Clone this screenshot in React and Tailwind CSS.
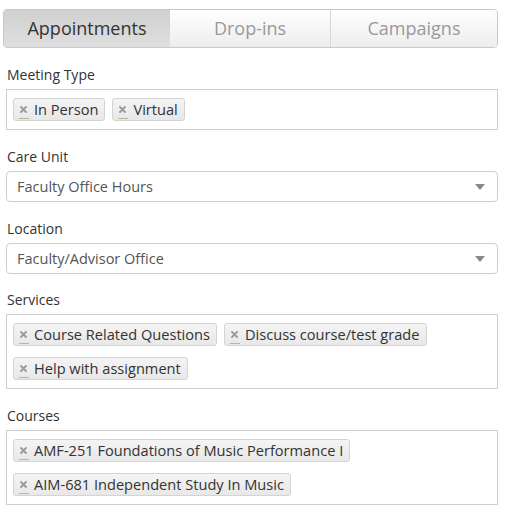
import React from 'react';

const Tag = ({ children }) => (
  <span className="inline-flex items-center h-[23px] pl-[6px] pr-[6px] rounded-[3px] border border-[#d4d4d4] bg-gradient-to-b from-[#f4f4f4] to-[#e8e8e8] text-[14.6px] leading-[21px] text-[#333]">
    <span className="relative mr-[7px] flex items-center">
      <svg width="7" height="7" viewBox="0 0 7 7">
        <path d="M1 1 L6 6 M6 1 L1 6" stroke="#999" strokeWidth="1.8" strokeLinecap="round" />
      </svg>
      <span className="absolute left-[-1px] right-[-2px] bottom-[-6px] h-px bg-[#bdb396]"></span>
    </span>
    {children}
  </span>
);

const Label = ({ children }) => (
  <div className="text-[14px] leading-[20px] text-[#333] mb-[4px] pl-px">{children}</div>
);

const MultiBox = ({ tags }) => (
  <div className="border border-[#cfcfcf] bg-white px-[6px] py-[8px] flex flex-wrap gap-x-[7px] gap-y-[11px]">
    {tags.map((t) => (
      <Tag key={t}>{t}</Tag>
    ))}
  </div>
);

const Select = ({ value }) => (
  <div className="h-[31px] border border-[#cfcfcf] rounded-[4px] bg-white flex items-center justify-between pl-[10px] pr-[12px]">
    <span className="text-[14.5px] text-[#555]">{value}</span>
    <svg width="10" height="6" viewBox="0 0 10 6">
      <path d="M0 0 L10 0 L5 6 Z" fill="#888" />
    </svg>
  </div>
);

export default function App() {
  const tabs = ['Appointments', 'Drop-ins', 'Campaigns'];
  return (
    <div className="bg-white w-[521px] h-[511px] pt-[9px]" style={{ fontFamily: '"Open Sans", "Noto Sans", sans-serif' }}>
      <div className="ml-[3px] w-[495px] h-[39px] flex border border-[#c9c9c9] rounded-[4px] overflow-hidden">
        {tabs.map((t, i) => (
          <div
            key={t}
            className={
              i === 0
                ? 'w-[166px] flex items-center justify-center text-[18px] text-[#333] bg-gradient-to-b from-[#d0d0d0] to-[#dfdfdf]'
                : i === 1
                ? 'w-[161px] flex items-center justify-center text-[18px] text-[#999] bg-gradient-to-b from-white to-[#ededed] border-r border-[#d6d6d6]'
                : 'flex-1 flex items-center justify-center text-[18px] text-[#999] bg-gradient-to-b from-white to-[#ededed]'
            }
          >
            {t}
          </div>
        ))}
      </div>

      <div className="ml-[6px] w-[492px]">
        <div className="mt-[17px]">
          <Label>Meeting Type</Label>
          <MultiBox tags={['In Person', 'Virtual']} />
        </div>
        <div className="mt-[17px]">
          <Label>Care Unit</Label>
          <Select value="Faculty Office Hours" />
        </div>
        <div className="mt-[17px]">
          <Label>Location</Label>
          <Select value="Faculty/Advisor Office" />
        </div>
        <div className="mt-[16px]">
          <Label>Services</Label>
          <MultiBox tags={['Course Related Questions', 'Discuss course/test grade', 'Help with assignment']} />
        </div>
        <div className="mt-[17px]">
          <Label>Courses</Label>
          <MultiBox tags={['AMF-251 Foundations of Music Performance I', 'AIM-681 Independent Study In Music']} />
        </div>
      </div>
    </div>
  );
}
